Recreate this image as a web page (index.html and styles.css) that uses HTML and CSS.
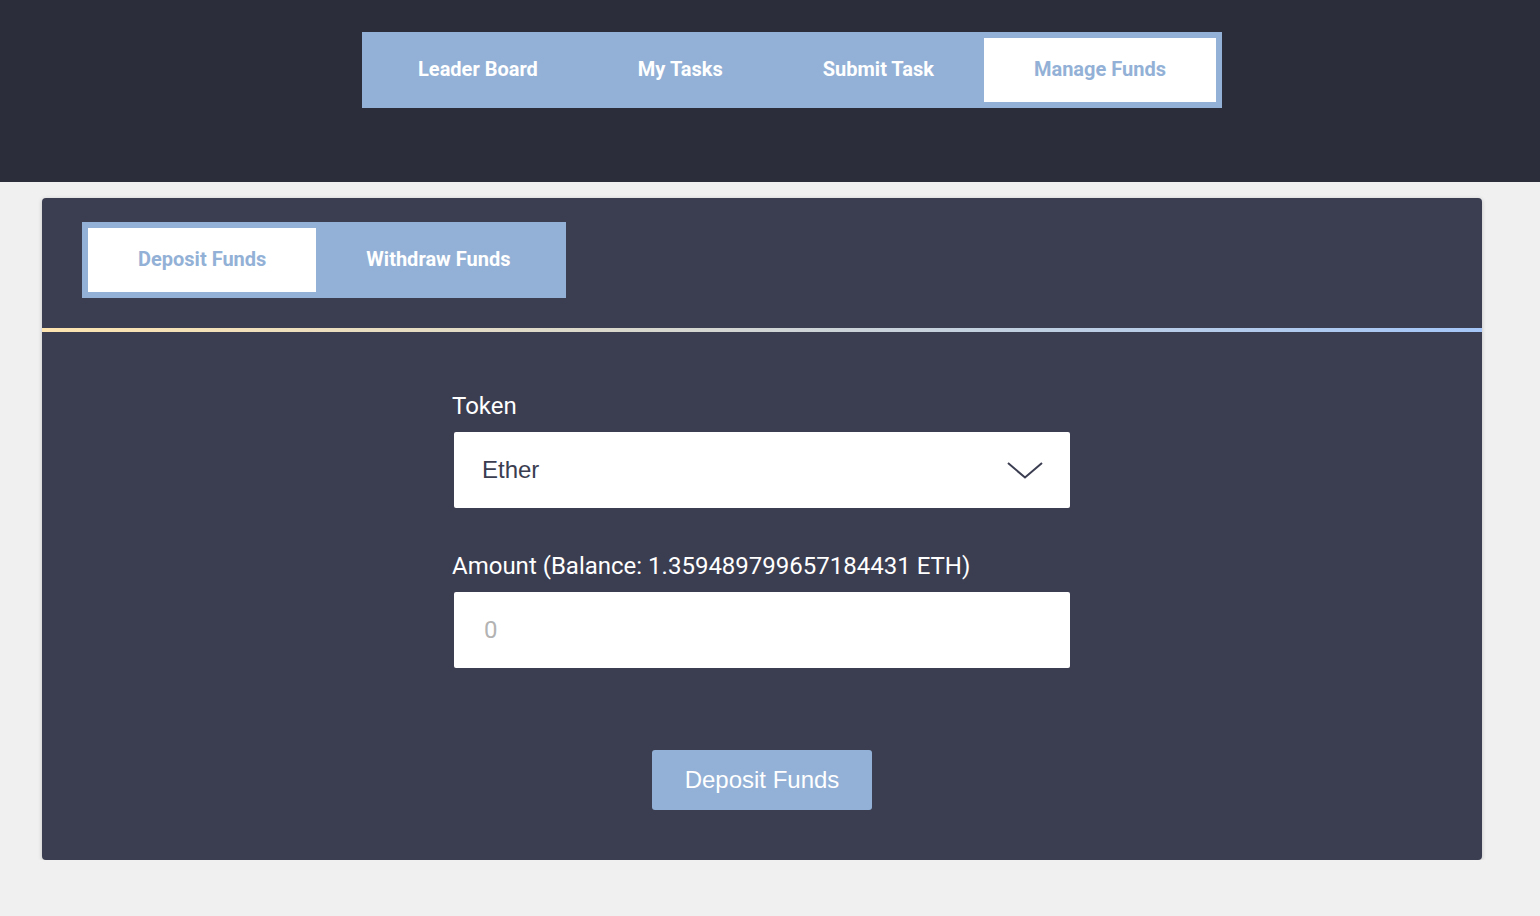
FILE: index.html
```html
<!DOCTYPE html>
<html lang="en">
<head>
<meta charset="utf-8">
<title>Manage Funds</title>
<link rel="stylesheet" href="styles.css">
</head>
<body>
<header class="topbar">
  <nav class="tabs">
    <a class="tab">Leader Board</a>
    <a class="tab">My Tasks</a>
    <a class="tab">Submit Task</a>
    <a class="tab active">Manage Funds</a>
  </nav>
</header>
<main class="card">
  <div class="card-head">
    <nav class="tabs">
      <a class="tab active">Deposit Funds</a>
      <a class="tab">Withdraw Funds</a>
    </nav>
  </div>
  <div class="divider"></div>
  <form class="form">
    <label class="label">Token</label>
    <div class="select">
      <span class="select-value">Ether</span>
      <svg class="chevron" width="36" height="17" viewBox="0 0 36 17"><path d="M1 1 L18 15.5 L35 1" fill="none" stroke="#3b3d51" stroke-width="2"/></svg>
    </div>
    <label class="label gap">Amount (Balance: 1.359489799657184431 ETH)</label>
    <input class="input" type="text" placeholder="0">
    <div class="actions">
      <button class="btn" type="button">Deposit Funds</button>
    </div>
  </form>
</main>
</body>
</html>
```
FILE: styles.css
```css
* { box-sizing: border-box; }
body {
  margin: 0;
  background: #f0f0f0;
  font-family: Roboto, "Liberation Sans", sans-serif;
}
.topbar {
  background: #2b2d3b;
  height: 182px;
  padding: 32px 0 0 44px;
  display: flex;
  justify-content: center;
  align-items: flex-start;
}
.tabs {
  display: flex;
  background: #93b1d6;
  padding: 6px;
}
.tab {
  display: flex;
  align-items: center;
  height: 64px;
  padding: 0 50px 2px;
  color: #fff;
  font-weight: 700;
  font-size: 20px;
  white-space: nowrap;
  cursor: pointer;
}
.tab.active {
  background: #fff;
  color: #93b1d6;
}
.card {
  margin: 16px 0 0 42px;
  width: 1440px;
  background: #3b3d51;
  border-radius: 4px;
  box-shadow: 0 1px 4px rgba(0,0,0,0.2);
  padding-bottom: 50px;
}
.card-head {
  padding: 24px 40px 30px;
  display: flex;
}
.divider {
  height: 4px;
  background: linear-gradient(to right, #fde4b0, #a4c6f8);
}
.form {
  width: 616px;
  margin: 0 auto;
  padding-top: 60px;
  display: flex;
  flex-direction: column;
}
.label {
  color: #fff;
  font-size: 24px;
  line-height: 28px;
  margin-left: -2px;
  margin-bottom: 12px;
}
.label.gap { margin-top: 44px; }
.select {
  height: 76px;
  background: #fff;
  border-radius: 2px;
  display: flex;
  align-items: center;
  justify-content: space-between;
  padding: 0 27px 0 28px;
}
.select-value {
  font-family: "Liberation Sans", Arial, sans-serif;
  font-size: 24px;
  color: #3b3d51;
}
.chevron { margin-top: 1px; }
.input {
  height: 76px;
  border: none;
  border-radius: 2px;
  background: #fff;
  padding: 0 30px;
  font-family: Roboto, sans-serif;
  font-size: 24px;
  color: #3b3d51;
  outline: none;
}
.input::placeholder { color: #b3b3b3; }
.actions {
  display: flex;
  justify-content: center;
  margin-top: 82px;
}
.btn {
  width: 220px;
  height: 60px;
  border: none;
  border-radius: 3px;
  background: #93b1d6;
  color: #fff;
  font-family: "Liberation Sans", Arial, sans-serif;
  font-size: 24px;
  cursor: pointer;
}
```
